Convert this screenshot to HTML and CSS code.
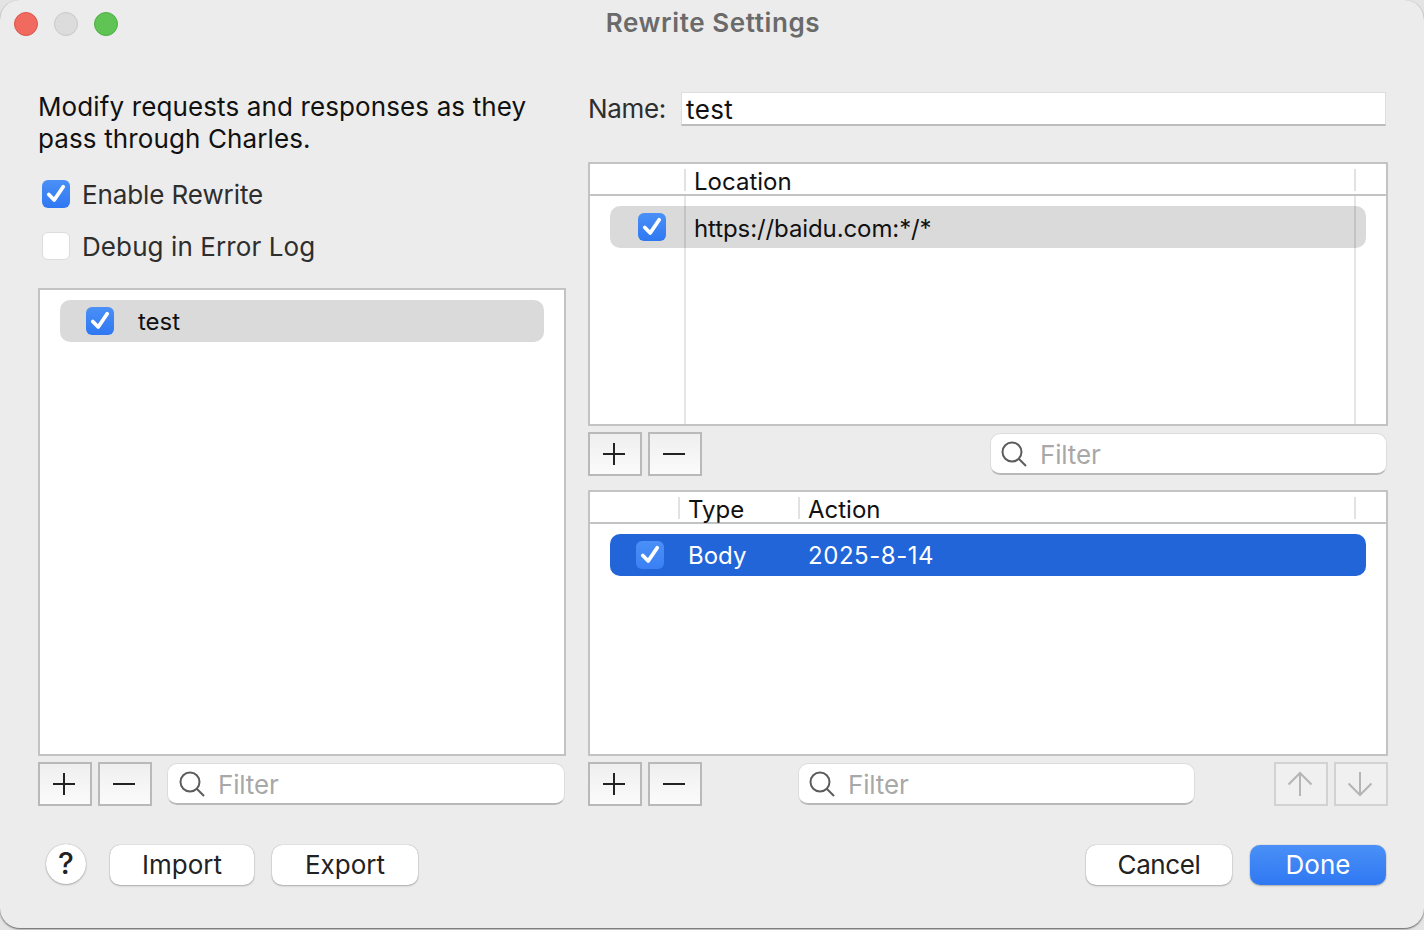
FILE: index.html
```html
<!DOCTYPE html>
<html lang="en">
<head>
    <meta charset="UTF-8">
    <meta name="viewport" content="width=device-width, initial-scale=1.0">
    <title>Rewrite Settings</title>
    <link rel="stylesheet" href="styles.css">
</head>
<body>
    <svg width="0" height="0" class="sprite">
        <symbol id="tick" viewBox="0 0 28 28">
            <path d="M6.800 14.500L12.200 20L21.200 6.800" fill="none" stroke="#fff" stroke-width="3.800" stroke-linecap="round" stroke-linejoin="round"/>
        </symbol>
        <symbol id="plus" viewBox="0 0 24 24">
            <path d="M12 1v22M1 12h22" fill="none" stroke="currentColor" stroke-width="2"/>
        </symbol>
        <symbol id="minus" viewBox="0 0 24 24">
            <path d="M1 12h22" fill="none" stroke="currentColor" stroke-width="2"/>
        </symbol>
        <symbol id="up" viewBox="0 0 26 26">
            <path d="M13 25V2M1.500 13.500L13 2l11.500 11.500" fill="none" stroke="currentColor" stroke-width="2"/>
        </symbol>
        <symbol id="down" viewBox="0 0 26 26">
            <path d="M13 1v23M1.500 12.500L13 24l11.500-11.500" fill="none" stroke="currentColor" stroke-width="2"/>
        </symbol>
        <symbol id="search" viewBox="0 0 26 26">
            <circle cx="11" cy="11" r="9.500" fill="none" stroke="currentColor" stroke-width="2"/>
            <path d="M17.500 17.500l7.500 7.500" fill="none" stroke="currentColor" stroke-width="2"/>
        </symbol>
    </svg>

    <div class="window">
        <header class="titlebar">
            <div class="lights">
                <span class="light red"></span>
                <span class="light grey"></span>
                <span class="light green"></span>
            </div>
            <h1>Rewrite Settings</h1>
        </header>

        <main class="content">
            <section class="left">
                <p class="intro">Modify requests and responses as they<br>pass through Charles.</p>
                <label class="option first"><span class="check on"><svg><use href="#tick"/></svg></span>Enable Rewrite</label>
                <label class="option second"><span class="check"></span>Debug in Error Log</label>

                <div class="table rules">
                    <div class="row selected">
                        <span class="check on"><svg><use href="#tick"/></svg></span>
                        <span class="rule-name">test</span>
                    </div>
                </div>

                <div class="tools">
                    <button class="tool" type="button"><svg><use href="#plus"/></svg></button>
                    <button class="tool" type="button"><svg><use href="#minus"/></svg></button>
                    <div class="filter rules-filter"><svg><use href="#search"/></svg><span>Filter</span></div>
                </div>
            </section>

            <section class="right">
                <div class="name-row">
                    <label class="name-label">Name:</label>
                    <div class="name-input">test</div>
                </div>

                <div class="table locations">
                    <div class="head">
                        <span class="head-cell loc-check"></span>
                        <span class="head-cell loc-main">Location</span>
                        <span class="head-cell last"></span>
                    </div>
                    <div class="row selected">
                        <span class="check on"><svg><use href="#tick"/></svg></span>
                        <span class="url">https://baidu.com:*/*</span>
                    </div>
                    <i class="rule rule-a"></i>
                    <i class="rule rule-b"></i>
                </div>

                <div class="tools mid-tools">
                    <button class="tool" type="button"><svg><use href="#plus"/></svg></button>
                    <button class="tool" type="button"><svg><use href="#minus"/></svg></button>
                    <div class="filter loc-filter"><svg><use href="#search"/></svg><span>Filter</span></div>
                </div>

                <div class="table actions">
                    <div class="head">
                        <span class="head-cell act-check"></span>
                        <span class="head-cell act-type">Type</span>
                        <span class="head-cell act-main">Action</span>
                        <span class="head-cell last"></span>
                    </div>
                    <div class="row active">
                        <span class="check on"><svg><use href="#tick"/></svg></span>
                        <span class="type">Body</span>
                        <span class="date">2025-8-14</span>
                    </div>
                </div>

                <div class="tools">
                    <button class="tool" type="button"><svg><use href="#plus"/></svg></button>
                    <button class="tool" type="button"><svg><use href="#minus"/></svg></button>
                    <div class="filter act-filter"><svg><use href="#search"/></svg><span>Filter</span></div>
                    <button class="tool off" type="button"><svg><use href="#up"/></svg></button>
                    <button class="tool off" type="button"><svg><use href="#down"/></svg></button>
                </div>
            </section>
        </main>

        <footer class="footer">
            <button class="help" type="button">?</button>
            <button class="btn import" type="button">Import</button>
            <button class="btn export" type="button">Export</button>
            <button class="btn cancel" type="button">Cancel</button>
            <button class="btn done" type="button">Done</button>
        </footer>
    </div>
</body>
</html>
```

FILE: styles.css
```css
* {
    box-sizing: border-box;
}
html, body {
    margin: 0;
    height: 100%;
}
body {
    background-color: #e4e4e4;
    font-family: 'Inter', 'Noto Sans', sans-serif;
    font-size: 26px;
    color: #1a1a1a;
    overflow: hidden;
}
.sprite {
    display: block;
}
.window {
    width: 1424px;
    height: 928px;
    background-color: #ececec;
    border-radius: 20px;
    box-shadow: 0 1px 2px rgba(0, 0, 0, 0.6);
    display: flex;
    flex-direction: column;
}

/* title bar */
.titlebar {
    height: 46px;
    flex: none;
    position: relative;
}
.titlebar h1 {
    margin: 0;
    text-align: center;
    font-size: 26px;
    font-weight: 600;
    line-height: 46px;
    letter-spacing: 0.6px;
    color: #6a6a6a;
    padding-left: 2px;
}
.lights {
    position: absolute;
    top: 12px;
    left: 14px;
    display: flex;
    gap: 16px;
}
.light {
    width: 24px;
    height: 24px;
    border-radius: 50%;
    border: 1px solid;
}
.red {
    background-color: #f06a5f;
    border-color: #d9574d;
}
.grey {
    background-color: #dcdcdc;
    border-color: #c8c8c8;
}
.green {
    background-color: #5fc454;
    border-color: #50ae46;
}

/* columns */
.content {
    flex: none;
    height: 760px;
    padding-left: 38px;
    display: flex;
    gap: 22px;
}
.left {
    width: 528px;
    flex: none;
}
.right {
    width: 800px;
    flex: none;
}
.intro {
    margin: 0;
    padding-top: 45px;
    line-height: 32px;
    height: 110px;
    color: #111;
    letter-spacing: 0.12px;
}
.option {
    display: flex;
    align-items: center;
    gap: 12px;
    height: 28px;
    margin-top: 24px;
    padding-left: 4px;
    color: #2e2e2e;
}
.first {
    letter-spacing: -0.1px;
}
.second {
    letter-spacing: 0.1px;
}

/* checkboxes */
.check {
    width: 28px;
    height: 28px;
    flex: none;
    border-radius: 6px;
    background-color: #fff;
    border: 1px solid #dcdcdc;
    display: block;
}
.check svg {
    width: 28px;
    height: 28px;
    display: block;
}
.check.on {
    border: 0;
    background: linear-gradient(#4a90f7, #2f78f2);
}

/* tables */
.table {
    position: relative;
    background-color: #fff;
    border: 2px solid #c3c3c3;
}
.rules {
    margin-top: 28px;
    height: 468px;
    padding: 10px 20px;
}
.locations {
    margin-top: 37px;
    height: 264px;
}
.actions {
    margin-top: 14px;
    height: 266px;
}
.head {
    height: 32px;
    border-bottom: 2px solid #c3c3c3;
    display: flex;
    padding-top: 5px;
    font-size: 24px;
    line-height: 25px;
    color: #111;
}
.head-cell {
    height: 22px;
    display: block;
    border-right: 2px solid #e2e2e2;
    padding-left: 8px;
    white-space: nowrap;
}
.head-cell.last {
    border-right: 0;
    width: 30px;
}
.loc-check {
    width: 96px;
}
.loc-main {
    width: 670px;
}
.act-check {
    width: 90px;
}
.act-type {
    width: 120px;
}
.act-main {
    width: 556px;
}
.rule {
    position: absolute;
    top: 32px;
    bottom: 0;
    width: 2px;
    background-color: rgba(0, 0, 0, 0.1);
}
.rule-a {
    left: 94px;
}
.rule-b {
    left: 764px;
}
.row {
    height: 42px;
    border-radius: 10px;
    display: flex;
    align-items: center;
    font-size: 24px;
}
.selected {
    background-color: #dadada;
    color: #111;
}
.active {
    background-color: #2165d9;
    color: #fff;
}
.rules .row {
    padding-left: 26px;
    gap: 24px;
}
.locations .row {
    margin: 10px 20px 0;
    padding-left: 28px;
    gap: 28px;
}
.actions .row {
    margin: 10px 20px 0;
    padding-left: 26px;
}
.actions .check.on {
    background: linear-gradient(#4a90f7, #3a80f4);
    margin-right: 24px;
}
.url {
    padding-top: 2px;
    letter-spacing: -0.1px;
}
.type {
    width: 120px;
}
.date {
    letter-spacing: 0.55px;
}

/* toolbars under tables */
.tools {
    display: flex;
    align-items: center;
    gap: 6px;
    height: 44px;
    margin-top: 6px;
}
.tool {
    width: 54px;
    height: 44px;
    padding: 0;
    flex: none;
    background: linear-gradient(#efefef, #fbfbfb);
    border: 2px solid #b9b9b9;
    color: #222;
    display: flex;
    align-items: center;
    justify-content: center;
}
.tool svg {
    width: 24px;
    height: 24px;
    margin-right: 2px;
    display: block;
}
.tool.off {
    background: #f0f0f0;
    border-color: #d2d2d2;
    color: #b5b5b5;
}
.tool.off svg {
    width: 26px;
    height: 26px;
}
.filter {
    height: 42px;
    background-color: #fff;
    border: 1px solid #dcdcdc;
    border-bottom: 2px solid #b8b8b8;
    border-radius: 10px;
    display: flex;
    align-items: center;
    padding-left: 10px;
    gap: 13px;
    color: #a8a8a8;
    flex: none;
}
.filter span {
    padding-top: 2px;
    letter-spacing: -0.15px;
}
.filter svg {
    width: 26px;
    height: 26px;
    color: #5c5c5c;
    display: block;
}
.rules-filter {
    width: 398px;
    margin-left: 9px;
    padding-left: 11px;
}
.loc-filter {
    width: 397px;
    margin-left: auto;
    margin-right: 1px;
}
.act-filter {
    width: 397px;
    margin-left: 90px;
    margin-right: 73px;
}

/* name field */
.name-row {
    display: flex;
    align-items: center;
    margin-top: 46px;
    height: 33px;
}
.name-label {
    width: 93px;
    flex: none;
    letter-spacing: -0.35px;
    color: #2e2e2e;
}
.name-input {
    width: 705px;
    height: 34px;
    padding-left: 4px;
    line-height: 34px;
    letter-spacing: 0.4px;
    background-color: #fff;
    border: 1px solid #dedede;
    border-bottom: 2px solid #bdbdbd;
    color: #111;
}

/* footer buttons */
.footer {
    flex: none;
    display: flex;
    align-items: center;
    padding: 39px 38px 0 46px;
}
.help, .btn {
    font-family: inherit;
    font-size: 26px;
    color: #222;
    background-color: #fff;
    border: 0;
    padding: 0 0 2px;
    box-shadow: 0 0 1px rgba(0, 0, 0, 0.35), 0 1px 2px rgba(0, 0, 0, 0.25);
}
.help {
    width: 40px;
    height: 40px;
    margin-top: -2px;
    border-radius: 50%;
    font-size: 30px;
    font-weight: 500;
}
.btn {
    height: 40px;
    border-radius: 10px;
}
.import {
    width: 144px;
    margin-left: 24px;
}
.export {
    width: 146px;
    margin-left: 18px;
}
.cancel {
    width: 146px;
    margin-left: auto;
    letter-spacing: -0.4px;
}
.done {
    width: 136px;
    margin-left: 18px;
    color: #fff;
    background: linear-gradient(#4a90f7, #2f78f2);
}
```
